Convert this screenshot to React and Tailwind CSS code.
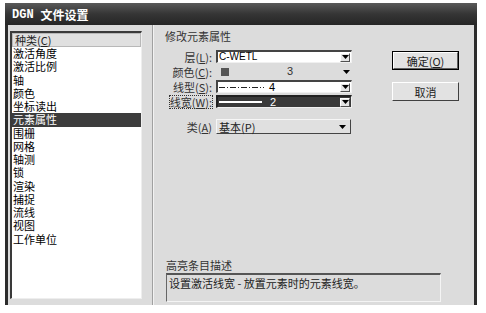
const Tri = ({ color = "#000" }) => (
  <svg width="7" height="4" viewBox="0 0 7 4">
    <polygon points="0,0 7,0 3.5,4" fill={color} />
  </svg>
);

const DropBtn = () => (
  <div className="w-[10px] h-[9px] mr-[1px] bg-[#e4e4e4] border border-t-white border-l-white border-r-[#505050] border-b-[#505050] flex items-center justify-center">
    <Tri />
  </div>
);

const Label = ({ text, u, focus }) => (
  <div className="w-[47px] flex justify-end text-[#333]">
    <span className={focus ? "outline outline-1 outline-dotted outline-[#333] leading-[12px]" : "leading-[12px]"}>
      {text}(<span className="underline">{u}</span>):
    </span>
  </div>
);

export default function App() {
  const items = [
    "激活角度",
    "激活比例",
    "轴",
    "颜色",
    "坐标读出",
    "元素属性",
    "围栅",
    "网格",
    "轴测",
    "锁",
    "渲染",
    "捕捉",
    "流线",
    "视图",
    "工作单位",
  ];
  return (
    <div className="w-[486px] h-[313px] bg-white pt-[3px] pl-[5px] font-['Noto_Sans_CJK_SC',sans-serif] text-[11px] text-[#222]">
      <div className="w-[472px] h-[302px] flex flex-col bg-[#2c2c2c]">
        {/* title bar */}
        <div className="h-[22px] shrink-0 flex items-center pl-[7px] pt-[1px] bg-linear-to-b from-[#5a5a5a] via-[#353535] to-[#262626] text-white font-bold text-[12px]">
          <span className="font-['Liberation_Mono',monospace] leading-[14px]">DGN</span>
          <span className="ml-[7px] leading-[14px]">文件设置</span>
        </div>
        {/* body */}
        <div className="flex-1 mx-[3px] bg-[#dcdcdc] flex">
          {/* left panel */}
          <div className="w-[144px] shrink-0 pt-[6px] pl-[2px]">
            <div className="w-[132px] h-[268px] bg-white border-t-2 border-l-2 border-r border-b border-t-[#3a3a3a] border-l-[#3a3a3a] border-r-[#eeeeee] border-b-[#eeeeee]">
              <div className="h-[14px] bg-[#e0e0e0] border border-[#b8b8b8] pl-[2px] leading-[12px] text-[#222]">
                种类(<span className="underline">C</span>)
              </div>
              {items.map((it) => (
                <div
                  key={it}
                  className={
                    it === "元素属性"
                      ? "h-[13.25px] leading-[13px] pl-[1px] bg-[#3c3c3c] text-white"
                      : "h-[13.25px] leading-[13px] pl-[1px] text-black"
                  }
                >
                  {it}
                </div>
              ))}
            </div>
          </div>
          {/* separator */}
          <div className="w-px bg-[#a0a0a0]" />
          <div className="w-px bg-[#f2f2f2]" />
          {/* right panel */}
          <div className="flex-1 flex flex-col pl-[11px]">
            <div className="flex">
              <div className="w-[187px]">
                <div className="mt-[4px] h-[14px] leading-[14px] text-[#333]">修改元素属性</div>
                <div className="mt-[7px] flex flex-col gap-[2px]">
                  {/* 层 */}
                  <div className="flex items-center h-[13px]">
                    <Label text="层" u="L" />
                    <div className="ml-[4px] w-[136px] h-[13px] bg-white border-t-2 border-l-2 border-r border-b border-t-[#444] border-l-[#444] border-r-[#f0f0f0] border-b-[#f0f0f0] flex items-center">
                      <span className="flex-1 pl-[1px] font-['Liberation_Sans',sans-serif] text-[10px] leading-[10px] text-black">C-WETL</span>
                      <DropBtn />
                    </div>
                  </div>
                  {/* 颜色 */}
                  <div className="flex items-center h-[13px]">
                    <Label text="颜色" u="C" />
                    <div className="ml-[4px] w-[136px] h-[13px] flex items-center">
                      <div className="ml-[5px] w-[8px] h-[8px] bg-[#555]" />
                      <span className="ml-[58px] flex-1 font-['Liberation_Sans',sans-serif] text-[11px] leading-[11px] text-[#333]">3</span>
                      <div className="mr-[2px]">
                        <Tri />
                      </div>
                    </div>
                  </div>
                  {/* 线型 */}
                  <div className="flex items-center h-[13px]">
                    <Label text="线型" u="S" />
                    <div className="ml-[4px] w-[136px] h-[13px] bg-white border-t-2 border-l-2 border-r border-b border-t-[#444] border-l-[#444] border-r-[#f0f0f0] border-b-[#f0f0f0] flex items-center">
                      <svg width="45" height="3" className="ml-[1px]">
                        <line x1="0" y1="1.5" x2="45" y2="1.5" stroke="#222" strokeWidth="1" strokeDasharray="6 2 1 2" />
                      </svg>
                      <span className="ml-[5px] flex-1 font-['Liberation_Sans',sans-serif] text-[11px] leading-[11px] text-black">4</span>
                      <DropBtn />
                    </div>
                  </div>
                  {/* 线宽 */}
                  <div className="flex items-center h-[13px]">
                    <Label text="线宽" u="W" focus />
                    <div className="ml-[4px] w-[136px] h-[13px] bg-[#3a3a3a] border-t-2 border-l-2 border-r border-b border-t-[#222] border-l-[#222] border-r-[#f0f0f0] border-b-[#f0f0f0] flex items-center">
                      <div className="ml-[1px] w-[43px] h-[2px] bg-white" />
                      <span className="ml-[8px] flex-1 font-['Liberation_Sans',sans-serif] text-[11px] leading-[11px] text-white">2</span>
                      <DropBtn />
                    </div>
                  </div>
                </div>
                {/* 类 */}
                <div className="mt-[11px] flex items-center h-[15px]">
                  <div className="w-[47px] flex justify-end text-[#333] leading-[12px]">
                    类(<span className="underline">A</span>)
                  </div>
                  <div className="ml-[4px] w-[135px] h-[15px] bg-[#e0e0e0] border border-t-[#f6f6f6] border-l-[#f6f6f6] border-r-[#444] border-b-[#444] flex items-center">
                    <span className="flex-1 pl-[2px] leading-[12px] text-[#222]">
                      基本(<span className="">P</span>)
                    </span>
                    <div className="mr-[4px]">
                      <Tri />
                    </div>
                  </div>
                </div>
              </div>
              {/* buttons */}
              <div className="ml-[40px] pt-[26px] flex flex-col">
                <div className="w-[67px] h-[19px] border border-black bg-[#e2e2e2] flex">
                  <div className="flex-1 border border-t-white border-l-white border-r-[#606060] border-b-[#606060] flex items-center justify-center leading-[12px] text-[#222]">
                    确定(<span className="underline">O</span>)
                  </div>
                </div>
                <div className="mt-[12px] w-[67px] h-[19px] bg-[#e2e2e2] border border-t-white border-l-white border-r-[#404040] border-b-[#404040] flex items-center justify-center leading-[12px] text-[#222]">
                  取消
                </div>
              </div>
            </div>
            {/* description */}
            <div className="mt-auto mb-[3px] pl-[1px]">
              <div className="h-[14px] leading-[14px] text-[#333]">高亮条目描述</div>
              <div className="mt-[1px] w-[275px] h-[29px] border-t-2 border-l border-r border-b border-t-[#555] border-l-[#666] border-r-[#f4f4f4] border-b-[#f4f4f4] pl-[2px] pt-[1px] leading-[14px] text-[#222]">
                设置激活线宽 - 放置元素时的元素线宽。
              </div>
            </div>
          </div>
        </div>
      </div>
    </div>
  );
}
